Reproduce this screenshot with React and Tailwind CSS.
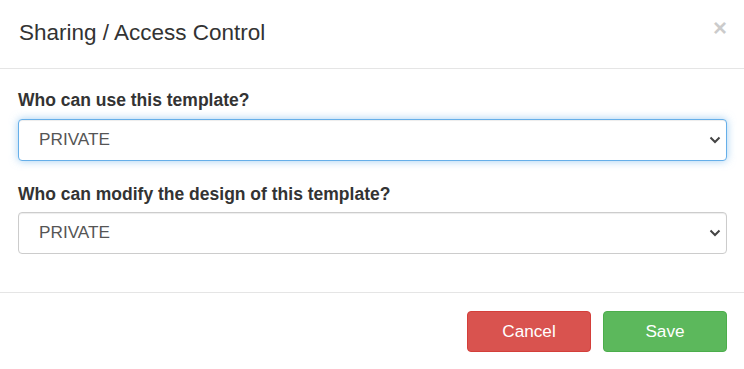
import React from 'react';

const Chevron = () => (
  <svg width="12" height="8" viewBox="0 0 12 8" className="absolute right-[5px] top-1/2 -translate-y-1/2">
    <path d="M1.5 1.5 L6 6 L10.5 1.5" fill="none" stroke="#444" strokeWidth="2" />
  </svg>
);

const Select = ({ focused }) => (
  <div
    className={`relative h-[42px] w-full rounded-[4px] border bg-white flex items-center pl-[20px] text-[17.2px] text-[#555] ${
      focused
        ? 'border-[#66afe9] shadow-[inset_0_1px_1px_rgba(0,0,0,0.075),0_0_8px_rgba(102,175,233,0.6)]'
        : 'border-[#ccc] shadow-[inset_0_1px_1px_rgba(0,0,0,0.075)]'
    }`}
  >
    PRIVATE
    <Chevron />
  </div>
);

export default function App() {
  return (
    <div className="w-[744px] h-[369px] bg-white text-[#333] font-['Liberation_Sans',Arial,sans-serif] flex flex-col">
      <div className="h-[69px] border-b border-[#e5e5e5] flex items-center justify-between pl-[19px] pr-[17px]">
        <h4 className="text-[22.5px] leading-none text-[#333] pb-[2px]">Sharing / Access Control</h4>
        <span className="text-[24px] font-bold leading-none text-black opacity-20 -mt-[12px]">×</span>
      </div>
      <div className="pl-[18px] pr-[17px] pt-[20px] h-[224px] border-b border-[#e5e5e5]">
        <label className="block text-[17.5px] font-bold leading-[22px] mb-[8px]">Who can use this template?</label>
        <Select focused />
        <label className="block text-[17.5px] font-bold leading-[22px] mt-[22px] mb-[7px]">Who can modify the design of this template?</label>
        <Select />
      </div>
      <div className="flex justify-end gap-[12px] px-[17px] pt-[18px]">
        <button className="w-[124px] h-[41px] rounded-[4px] border border-[#d43f3a] bg-[#d9534f] text-white text-[17.2px]">Cancel</button>
        <button className="w-[124px] h-[41px] rounded-[4px] border border-[#4cae4c] bg-[#5cb85c] text-white text-[17.2px]">Save</button>
      </div>
    </div>
  );
}
